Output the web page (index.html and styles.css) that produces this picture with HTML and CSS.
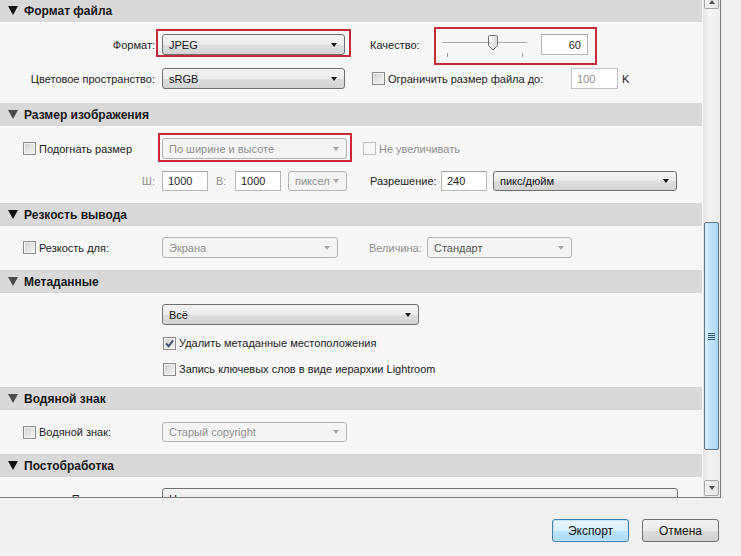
FILE: index.html
```html
<!DOCTYPE html>
<html lang="ru">
<head>
<meta charset="utf-8">
<title>Экспорт</title>
<link rel="stylesheet" href="styles.css">
</head>
<body>
<div class="panel">
  <div class="viewport">
    <div class="scroller">
      <div class="head"><svg class="tri" viewBox="0 0 10 9"><path d="M0 0H10L5 9Z"/></svg><span>Формат файла</span></div>
      <div class="body b1">
        <div class="row">
          <span class="lab">Формат:</span>
          <span class="mark m-format"><span class="sel w183">JPEG<i class="arr"></i></span></span>
          <span class="rlab q">Качество:</span>
          <span class="mark m-quality">
            <span class="slider">
              <span class="track"></span>
              <span class="ticks"><i></i><i></i></span>
              <svg class="thumb" viewBox="0 0 10 16"><defs><linearGradient id="tg" x1="0" x2="1"><stop offset="0" stop-color="#fdfdfd"/><stop offset="1" stop-color="#d6d6d6"/></linearGradient></defs><path d="M1.5 .5h7a1 1 0 0 1 1 1v9l-4.5 4.5l-4.5-4.5v-9a1 1 0 0 1 1-1z" fill="url(#tg)" stroke="#6f6f6f"/></svg>
            </span>
            <span class="inp w47 num">60</span>
          </span>
        </div>
        <div class="row">
          <span class="lab">Цветовое пространство:</span>
          <span class="sel w183 ml7">sRGB<i class="arr"></i></span>
          <span class="cbl limit"><span class="cb"></span>Ограничить размер файла до:</span>
          <span class="inp w47 dis">100</span>
          <span class="unit">K</span>
        </div>
      </div>

      <div class="head"><svg class="tri soft" viewBox="0 0 10 9"><path d="M0 0H10L5 9Z"/></svg><span>Размер изображения</span></div>
      <div class="body b2">
        <div class="row">
          <span class="lab-left"><span class="cbl"><span class="cb"></span>Подогнать размер</span></span>
          <span class="mark m-fit"><span class="sel w185 dsel">По ширине и высоте<i class="arr"></i></span></span>
          <span class="cbl dis noenl"><span class="cb off"></span>Не увеличивать</span>
        </div>
        <div class="row r20">
          <span class="lab dis">Ш:</span>
          <span class="inp w46 ml7">1000</span>
          <span class="glab dis">В:</span>
          <span class="inp w46">1000</span>
          <span class="sel w59 ml7 dsel">пиксел<i class="arr"></i></span>
          <span class="rlab res">Разрешение:</span>
          <span class="inp w46">240</span>
          <span class="sel w184 ml6">пикс/дюйм<i class="arr"></i></span>
        </div>
      </div>

      <div class="head"><svg class="tri" viewBox="0 0 10 9"><path d="M0 0H10L5 9Z"/></svg><span>Резкость вывода</span></div>
      <div class="body b3">
        <div class="row">
          <span class="lab-left"><span class="cbl"><span class="cb"></span>Резкость для:</span></span>
          <span class="sel w176 ml7 dsel">Экрана<i class="arr"></i></span>
          <span class="rlab dis amt">Величина:</span>
          <span class="sel w145 dsel dark">Стандарт<i class="arr"></i></span>
        </div>
      </div>

      <div class="head"><svg class="tri soft" viewBox="0 0 10 9"><path d="M0 0H10L5 9Z"/></svg><span>Метаданные</span></div>
      <div class="body b4">
        <div class="row">
          <span class="sel w257 ind162">Всё<i class="arr"></i></span>
        </div>
        <div class="row r18">
          <span class="cbl ind163"><span class="cb on"><svg viewBox="0 0 11 11"><path d="M2.2 5.4 4.6 8.2 9 2.4" fill="none" stroke="#3b4b6b" stroke-width="1.9"/></svg></span>Удалить метаданные местоположения</span>
        </div>
        <div class="row r18">
          <span class="cbl ind163"><span class="cb"></span>Запись ключевых слов в виде иерархии Lightroom</span>
        </div>
      </div>

      <div class="head"><svg class="tri soft" viewBox="0 0 10 9"><path d="M0 0H10L5 9Z"/></svg><span>Водяной знак</span></div>
      <div class="body b5">
        <div class="row r20">
          <span class="lab-left"><span class="cbl"><span class="cb"></span>Водяной знак:</span></span>
          <span class="sel w185 ml7 dsel">Старый copyright<i class="arr"></i></span>
        </div>
      </div>

      <div class="head"><svg class="tri" viewBox="0 0 10 9"><path d="M0 0H10L5 9Z"/></svg><span>Постобработка</span></div>
      <div class="body b6">
        <div class="row">
          <span class="lab">После экспорта:</span>
          <span class="sel w516 ml7">Ничего<i class="arr"></i></span>
        </div>
      </div>
    </div>
  </div>
  <div class="vscroll">
    <span class="sb-btn up"><i></i></span>
    <span class="sb-gap1"></span>
    <span class="sb-thumb"><i></i><i></i><i></i><i></i></span>
    <span class="sb-gap2"></span>
    <span class="sb-btn down"><i></i></span>
  </div>
</div>
<div class="footer">
  <button class="btn def">Экспорт</button>
  <button class="btn">Отмена</button>
</div>
</body>
</html>
```
FILE: styles.css
```css
* { box-sizing: border-box; }
html, body { margin: 0; height: 100%; }
body {
  background: #f0f0f0;
  font: 11px "Liberation Sans", Arial, sans-serif;
  color: #222;
  overflow: hidden;
}
.panel {
  display: flex;
  width: 721px;
  height: 498px;
  border-right: 1px solid #7d7d7d;
  border-bottom: 1px solid #7d7d7d;
  background: #f7f7f7;
}
.viewport { width: 703px; height: 100%; overflow: hidden; }
.scroller { margin-top: -1px; }

.head {
  height: 23px;
  background: #d9d9d9;
  display: flex;
  align-items: center;
  padding-left: 8px;
  gap: 6px;
  font-weight: bold;
  font-size: 12px;
  color: #151515;
  width: 702px;
}
.tri { width: 10px; height: 9px; fill: #111; }
.tri.soft { fill: #4a4a4a; }

.body { display: flex; flex-direction: column; }
.b1 { padding: 12px 0 14px; gap: 13px; }
.b2 { padding: 12px 0 12px; gap: 12px; }
.b3 { padding: 11px 0 12px; }
.b4 { padding: 11px 0 9px; gap: 8px; }
.b5 { padding: 12px 0 12px; }
.b6 { padding: 11px 0 30px; }

.row { display: flex; align-items: center; height: 21px; }
.row.r20 { height: 20px; }
.row.r18 { height: 18px; }
.b4 .row:first-child { margin-bottom: 1px; }

.lab { width: 155px; text-align: right; flex: none; }
.lab-left { width: 155px; flex: none; padding-left: 23px; display: flex; }
.dis { color: #8e8e8e; }
.ml7 { margin-left: 7px; }
.ml6 { margin-left: 6px; }
.ind162 { margin-left: 162px; }
.ind163 { margin-left: 163px; }

/* select */
.sel {
  position: relative;
  display: flex;
  align-items: center;
  height: 21px;
  padding-left: 6px;
  border: 1px solid #6f6f6f;
  border-radius: 3px;
  background: linear-gradient(#f4f4f4, #ececec 50%, #dedede 51%, #d4d4d4);
  color: #111;
  flex: none;
  white-space: nowrap;
  overflow: hidden;
}
.r20 .sel { height: 20px; }
.sel .arr {
  position: absolute;
  right: 7px;
  top: 50%;
  margin-top: -2px;
  border-top: 4px solid #111;
  border-left: 3.5px solid transparent;
  border-right: 3.5px solid transparent;
}
.sel.dsel {
  background: #f4f4f4;
  border-color: #b3b3b3;
  color: #909090;
}
.sel.dsel.dark { color: #555; }
.sel.dsel .arr { border-top-color: #a8a8a8; }
.w183 { width: 183px; }
.w185 { width: 185px; }
.w59 { width: 59px; }
.w184 { width: 184px; }
.w176 { width: 176px; }
.w145 { width: 145px; }
.w257 { width: 257px; }
.w516 { width: 516px; }

/* text inputs */
.inp {
  display: flex;
  align-items: center;
  height: 21px;
  padding: 0 5px;
  background: #fff;
  border: 1px solid #b6b6b6;
  border-top-color: #a4a4a4;
  color: #1e1e1e;
  flex: none;
}
.r20 .inp { height: 20px; }
.inp.num { justify-content: flex-end; padding-right: 6px; }
.inp.dis { color: #8e8e8e; border-color: #c4c4c4; }
.w46 { width: 46px; }
.w47 { width: 47px; }

/* annotation marks */
.mark { position: relative; display: flex; align-items: center; flex: none; }
.mark::after {
  content: "";
  position: absolute;
  border: 2px solid #c62a36;
  pointer-events: none;
}
.m-format { margin-left: 7px; }
.m-format::after { left: -6px; right: -6px; top: -5px; bottom: -2px; }
.m-quality::after { left: -6px; right: -9px; top: -6px; bottom: -8px; }
.m-fit { margin-left: 7px; }
.m-fit::after { left: -4px; right: -5px; top: -5px; bottom: -3px; }

/* right-hand labels */
.rlab { flex: none; }
.q { margin-left: 25px; width: 70px; }
.res { margin-left: 23px; width: 71px; }
.amt { margin-left: 31px; width: 58px; }
.glab { margin-left: 8px; width: 19px; flex: none; }
.unit { margin-left: 4px; }

/* slider */
.slider {
  position: relative;
  width: 87px;
  height: 22px;
  align-self: flex-start;
  margin-top: 2px;
  padding: 7px 0 0 2px;
  display: flex;
  flex-direction: column;
  gap: 9px;
  margin-right: 14px;
}
.track {
  width: 85px;
  height: 1px;
  background: #aaa;
  border-bottom: 1px solid #fff;
  box-sizing: content-box;
}
.ticks { display: flex; justify-content: space-between; padding: 0 4px 0 5px; height: 4px; }
.ticks i { width: 1px; height: 4px; background: #9a9a9a; }
.thumb { position: absolute; left: 48px; top: 0; width: 10px; height: 16px; }

/* checkboxes */
.cbl { display: flex; align-items: center; gap: 3px; white-space: nowrap; flex: none; }
.cb {
  width: 13px;
  height: 13px;
  border: 1px solid #8c8c8c;
  background: linear-gradient(135deg, #cfcfcf, #f7f7f7);
  box-shadow: inset 0 0 0 1px #f2f2f2;
  flex: none;
  display: flex;
}
.cb svg { width: 11px; height: 11px; }
.cb.off { border-color: #c3c3c3; background: #f7f7f7; box-shadow: none; }
.limit { margin-left: 27px; width: 199px; }
.noenl { margin-left: 16px; }

/* scrollbar */
.vscroll {
  width: 17px;
  display: flex;
  flex-direction: column;
  background: linear-gradient(to right, #e6e6e6, #f4f4f4 40%, #ececec);
  padding: 0 1px;
}
.sb-btn {
  display: flex;
  justify-content: center;
  border: 1px solid #a7a7a7;
  border-radius: 2px;
  background: linear-gradient(to right, #f4f4f4, #e4e4e4);
  flex: none;
}
.sb-btn.up { height: 9px; border-top: none; border-radius: 0 0 2px 2px; align-items: flex-start; }
.sb-btn.up i {
  border-bottom: 4px solid #555;
  border-left: 3.5px solid transparent;
  border-right: 3.5px solid transparent;
}
.sb-btn.down { height: 16px; align-items: center; }
.sb-btn.down i {
  border-top: 4px solid #555;
  border-left: 3.5px solid transparent;
  border-right: 3.5px solid transparent;
}
.sb-gap1 { height: 213px; flex: none; }
.sb-thumb {
  height: 228px;
  flex: none;
  border: 1px solid #5b7386;
  border-radius: 2px;
  background: linear-gradient(to right, #d9effb, #bfe3f8 45%, #a9d6f1);
  display: flex;
  flex-direction: column;
  justify-content: center;
  align-items: center;
  gap: 1px;
}
.sb-thumb i { width: 7px; height: 1px; background: #3d5a70; }
.sb-gap2 { height: 30px; flex: none; }

/* footer */
.footer {
  display: flex;
  justify-content: flex-end;
  gap: 13px;
  padding: 21px 22px 0 0;
}
.btn {
  width: 77px;
  height: 23px;
  font: 12px "Liberation Sans", Arial, sans-serif;
  color: #111;
  border: 1px solid #707070;
  border-radius: 3px;
  background: linear-gradient(#f2f2f2, #ebebeb 50%, #dddddd 51%, #cfcfcf);
  padding: 0;
}
.btn.def {
  border-color: #3c7fb1;
  background: linear-gradient(#eaf6fd, #d9f0fc 50%, #bee6fd 51%, #a7d9f5);
  box-shadow: inset 0 0 0 1px #c6e6f7;
}
```
